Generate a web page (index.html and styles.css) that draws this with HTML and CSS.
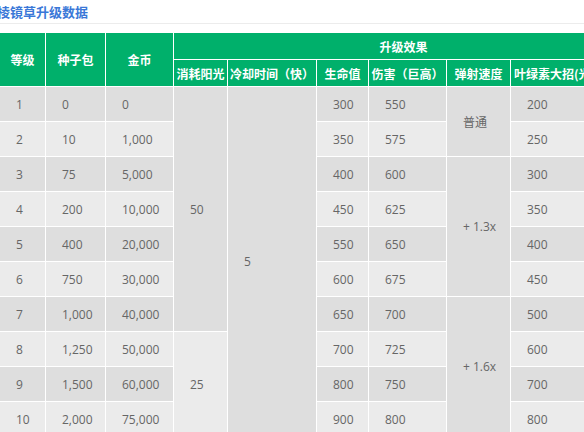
FILE: index.html
```html
<!DOCTYPE html>
<html lang="zh">
<head>
<meta charset="utf-8">
<title>棱镜草升级数据</title>
<link rel="stylesheet" href="styles.css">
</head>
<body>
<div class="page">
  <div class="title-bar">
    <h3 class="title">棱镜草升级数据</h3>
  </div>
  <div class="table-wrap">
    <table class="data">
      <colgroup>
        <col class="c1"><col class="c2"><col class="c3"><col class="c4"><col class="c5">
        <col class="c6"><col class="c7"><col class="c8"><col class="c9">
      </colgroup>
      <thead>
        <tr class="h1">
          <th rowspan="2">等级</th>
          <th rowspan="2">种子包</th>
          <th rowspan="2">金币</th>
          <th colspan="6">升级效果</th>
        </tr>
        <tr class="h2">
          <th>消耗阳光</th>
          <th>冷却时间（快）</th>
          <th>生命值</th>
          <th>伤害（巨高）</th>
          <th>弹射速度</th>
          <th class="left">叶绿素大招(光束伤害)</th>
        </tr>
      </thead>
      <tbody>
        <tr class="odd"><td>1</td><td>0</td><td>0</td><td rowspan="7">50</td><td rowspan="10">5</td><td>300</td><td>550</td><td rowspan="2">普通</td><td>200</td></tr>
        <tr class="even"><td>2</td><td>10</td><td>1,000</td><td>350</td><td>575</td><td>250</td></tr>
        <tr class="odd"><td>3</td><td>75</td><td>5,000</td><td>400</td><td>600</td><td rowspan="4">+ 1.3x</td><td>300</td></tr>
        <tr class="even"><td>4</td><td>200</td><td>10,000</td><td>450</td><td>625</td><td>350</td></tr>
        <tr class="odd"><td>5</td><td>400</td><td>20,000</td><td>550</td><td>650</td><td>400</td></tr>
        <tr class="even"><td>6</td><td>750</td><td>30,000</td><td>600</td><td>675</td><td>450</td></tr>
        <tr class="odd"><td>7</td><td>1,000</td><td>40,000</td><td>650</td><td>700</td><td rowspan="4">+ 1.6x</td><td>500</td></tr>
        <tr class="even"><td>8</td><td>1,250</td><td>50,000</td><td rowspan="3">25</td><td>700</td><td>725</td><td>600</td></tr>
        <tr class="odd"><td>9</td><td>1,500</td><td>60,000</td><td>800</td><td>750</td><td>700</td></tr>
        <tr class="even"><td>10</td><td>2,000</td><td>75,000</td><td>900</td><td>800</td><td>800</td></tr>
      </tbody>
    </table>
  </div>
</div>
</body>
</html>
```

FILE: styles.css
```css
html, body {
  margin: 0;
  padding: 0;
  background: #ffffff;
}

body {
  width: 584px;
  height: 432px;
  overflow: hidden;
  font-family: "Open Sans", "Noto Sans CJK SC", sans-serif;
}

.page {
  width: 584px;
}

.title-bar {
  height: 23px;
  border-bottom: 1px solid #ececec;
  margin-bottom: 8px;
  overflow: hidden;
}

.title {
  display: inline-block;
  margin: 0 0 0 -3px;
  height: 21px;
  font-family: "Noto Sans CJK SC", sans-serif;
  font-size: 13px;
  line-height: 14px;
  font-weight: bold;
  color: #3a78d8;
  border-bottom: 2px solid #f2a774;
  width: 91px;
  white-space: nowrap;
}

.table-wrap {
  margin-left: -1px;
  width: 640px;
}

.data {
  border-collapse: collapse;
  table-layout: fixed;
  width: 634px;
  font-size: 12px;
}

.c1 { width: 46px; }
.c2 { width: 60px; }
.c3 { width: 68px; }
.c4 { width: 54px; }
.c5 { width: 89px; }
.c6 { width: 52px; }
.c7 { width: 78px; }
.c8 { width: 64px; }
.c9 { width: 123px; }

.data th,
.data td {
  border: 1px solid #ffffff;
  white-space: nowrap;
  overflow: hidden;
}

.data th {
  background: #00b06b;
  color: #ffffff;
  font-family: "Noto Sans CJK SC", sans-serif;
  font-weight: bold;
  text-align: center;
  padding: 0 2px;
}

.data th.left {
  text-align: left;
  padding-left: 3px;
}

.h1 { height: 27px; }
.h2 { height: 27px; }

.data td {
  color: #666666;
  text-align: left;
  vertical-align: middle;
  padding: 0 0 0 16px;
  height: 34px;
}

.odd td { background: #dedede; }
.even td { background: #ebebeb; }
```
